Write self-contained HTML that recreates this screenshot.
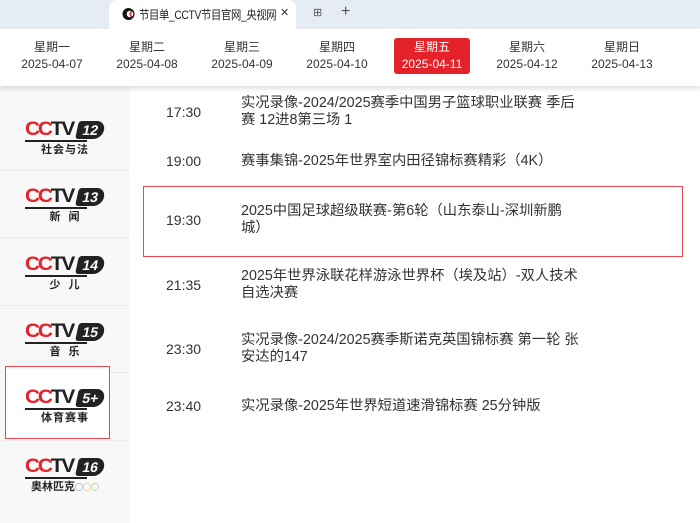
<!DOCTYPE html>
<html><head><meta charset="utf-8"><style>
*{margin:0;padding:0;box-sizing:border-box}
body{width:700px;height:523px;overflow:hidden;background:#fff;font-family:"Liberation Sans","Noto Sans CJK SC",sans-serif;position:relative;color:#333}
.tabbar{position:absolute;left:0;top:0;width:700px;height:29px;background:#e6ecf5}
.tab{position:absolute;left:109px;top:0;width:187px;height:29px;background:#fff;border-radius:8px 8px 0 0}
.tab .t{position:absolute;left:30px;top:6px;font-size:12px;color:#222;white-space:nowrap;letter-spacing:-0.4px;transform:scaleX(0.86);transform-origin:left}
.tab .x{position:absolute;left:171px;top:7px;font-size:11px;line-height:12px;color:#333}
.datebar{position:absolute;left:0;top:29px;width:700px;height:57px;background:#fff;box-shadow:0 3px 4px rgba(0,0,0,.12);z-index:2}
.d{position:absolute;top:9px;width:76px;height:36px;text-align:center;font-size:12px;line-height:17px;color:#333;padding-top:1px}
.d.on{background:#e3222a;color:#fff;border-radius:3px}
.side{position:absolute;left:0;top:86px;width:129px;height:437px;background:#f8f8f8}
.sep{position:absolute;left:0;width:129px;height:1px;background:#ececec}
.logo{position:absolute;left:25px;width:80px;height:36px}
.cc{position:absolute;left:0;top:0;font:bold 19px/18px "Liberation Sans",sans-serif;color:#222;letter-spacing:-2px;transform:scaleX(1.1);transform-origin:left}
.cc b{color:#e3222a}
.num{position:absolute;left:52px;top:0;width:27px;height:18px;background:#222;color:#fff;border-radius:3px 9px 9px 3px;font:bold 14px/18px "Liberation Sans",sans-serif;text-align:center;transform:skewX(-12deg)}
.ul{position:absolute;left:0;top:19px;width:62px;height:2px;background:#222}
.sub{position:absolute;left:0;width:80px;text-align:center;top:21px;font:bold 11px/14px "Noto Sans CJK SC",sans-serif;color:#222;letter-spacing:1px;white-space:nowrap}
.row{position:absolute;left:0;font-size:14.3px;line-height:17px;color:#333}
.tm{position:absolute;left:166px;font-size:14px}
.tx{position:absolute;left:241px;width:400px;white-space:nowrap}
.box{position:absolute;border:1px solid #e8474d}
</style></head><body>
<div class="tabbar">
 <div class="tab">
  <svg style="position:absolute;left:12px;top:7px" width="14" height="14" viewBox="0 0 14 14"><circle cx="7.5" cy="7" r="6" fill="#111"/><circle cx="9" cy="7" r="3.3" fill="#fff"/><path d="M11 4 A3.5 3.5 0 0 0 11 10" stroke="#e3222a" stroke-width="1.6" fill="none"/></svg>
  <span class="t">节目单_CCTV节目官网_央视网</span><span class="x">✕</span>
 </div>
 <span style="position:absolute;left:313px;top:6px;font-size:11px;color:#555">⊞</span>
 <span style="position:absolute;left:341px;top:3px;font-size:16px;color:#555">+</span>
</div>
<div class="datebar">
 <div class="d" style="left:14px">星期一<br>2025-04-07</div>
 <div class="d" style="left:109px">星期二<br>2025-04-08</div>
 <div class="d" style="left:204px">星期三<br>2025-04-09</div>
 <div class="d" style="left:299px">星期四<br>2025-04-10</div>
 <div class="d on" style="left:394px">星期五<br>2025-04-11</div>
 <div class="d" style="left:489px">星期六<br>2025-04-12</div>
 <div class="d" style="left:584px">星期日<br>2025-04-13</div>
</div>
<div class="side">
 <div class="sep" style="top:84px"></div><div class="sep" style="top:151px"></div><div class="sep" style="top:219px"></div><div class="sep" style="top:286px"></div><div class="sep" style="top:354px"></div>
</div>
<div class="logo" style="top:121px"><div class="cc"><b>CC</b>TV</div><div class="num">12</div><div class="ul"></div><div class="sub">社会与法</div></div>
<div class="logo" style="top:188px"><div class="cc"><b>CC</b>TV</div><div class="num">13</div><div class="ul"></div><div class="sub">新&nbsp;&nbsp;闻</div></div>
<div class="logo" style="top:256px"><div class="cc"><b>CC</b>TV</div><div class="num">14</div><div class="ul"></div><div class="sub">少&nbsp;&nbsp;儿</div></div>
<div class="logo" style="top:323px"><div class="cc"><b>CC</b>TV</div><div class="num">15</div><div class="ul"></div><div class="sub">音&nbsp;&nbsp;乐</div></div>
<div style="position:absolute;left:5px;top:366px;width:105px;height:73px;border:1px solid #e8474d;background:#fff"></div>
<div class="logo" style="top:389px"><div class="cc"><b>CC</b>TV</div><div class="num">5+</div><div class="ul"></div><div class="sub">体育赛事</div></div>
<div class="logo" style="top:458px"><div class="cc"><b>CC</b>TV</div><div class="num">16</div><div class="ul"></div><div class="sub" style="letter-spacing:0">奥林匹克<span style="color:#3a7bd5;font-size:8px">○</span><span style="color:#e8a21c;font-size:8px">○</span><span style="color:#4caf50;font-size:8px">○</span></div></div>

<div class="box" style="left:143px;top:186px;width:540px;height:71px"></div>
<div class="row" style="top:95px"><span class="tm" style="top:9px">17:30</span><span class="tx">实况录像-2024/2025赛季中国男子篮球职业联赛 季后<br>赛 12进8第三场 1</span></div>
<div class="row" style="top:153px"><span class="tm">19:00</span><span class="tx">赛事集锦-2025年世界室内田径锦标赛精彩（4K）</span></div>
<div class="row" style="top:203px"><span class="tm" style="top:9px">19:30</span><span class="tx">2025中国足球超级联赛-第6轮（山东泰山-深圳新鹏<br>城）</span></div>
<div class="row" style="top:268px"><span class="tm" style="top:9px">21:35</span><span class="tx">2025年世界泳联花样游泳世界杯（埃及站）-双人技术<br>自选决赛</span></div>
<div class="row" style="top:332px"><span class="tm" style="top:9px">23:30</span><span class="tx">实况录像-2024/2025赛季斯诺克英国锦标赛 第一轮 张<br>安达的147</span></div>
<div class="row" style="top:398px"><span class="tm">23:40</span><span class="tx">实况录像-2025年世界短道速滑锦标赛 25分钟版</span></div>
</body></html>
